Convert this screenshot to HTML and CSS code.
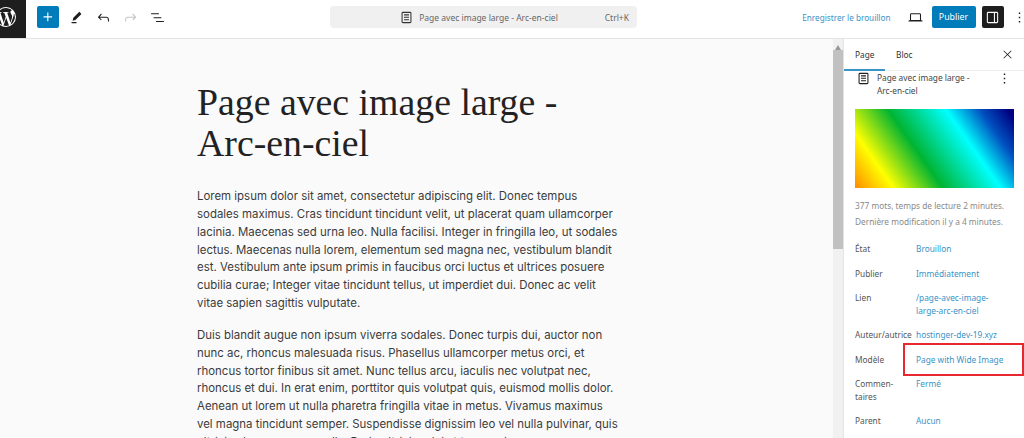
FILE: index.html
```html
<!DOCTYPE html>
<html lang="fr">
<head>
    <meta charset="UTF-8">
    <title>Page avec image large - Arc-en-ciel</title>
    <link rel="stylesheet" href="styles.css">
</head>
<body>
    <header class="topbar">
        <div class="tools">
            <a class="wp-logo">
                <svg width="20" height="20" viewBox="0 0 20 20"><path fill="#fff" fill-rule="evenodd" d="M10 0a10 10 0 1 0 0 20 10 10 0 0 0 0-20zM1.1 10c0-1.3.3-2.5.8-3.6l4.200 11.700A8.900 8.900 0 0 1 1.100 10zm8.900 8.900c-.9 0-1.700-.1-2.500-.4l2.700-7.700 2.700 7.500.1.100c-.9.300-1.900.5-3 .5zm1.200-13.100c.5 0 1-.1 1-.1.500-.1.400-.8 0-.8 0 0-1.500.1-2.400.1-.9 0-2.400-.1-2.400-.1-.5 0-.5.800-.1.800 0 0 .5.100 1 .1l1.400 3.900-2 6-3.300-9.900c.6 0 1-.1 1-.1.500-.1.400-.8 0-.8 0 0-1.500.1-2.400.1h-.6A8.900 8.900 0 0 1 10 1.100c2.300 0 4.400.9 6 2.300h-.1c-.9 0-1.500.8-1.500 1.600 0 .8.400 1.400.9 2.200.4.600.8 1.400.8 2.500 0 .8-.3 1.700-.7 3l-.9 3.100-3.300-10zm3.300 12l2.700-7.800c.5-1.300.7-2.300.7-3.200 0-.3 0-.6-.1-.9a8.900 8.900 0 0 1-3.300 11.900z"/></svg>
            </a>
            <button class="btn-primary btn-plus">
                <svg width="18" height="18" viewBox="0 0 24 24"><path fill="#fff" d="M11 12.500V17.500H12.500V12.500H17.500V11H12.500V6H11V11H6V12.500H11Z"/></svg>
            </button>
            <svg class="icon icon-first" viewBox="0 0 24 24"><path d="m19 7-3-3-8.500 8.500-1 4 4-1L19 7Zm-7 11.500H5V20h7v-1.500Z"/></svg>
            <svg class="icon" viewBox="0 0 24 24"><path d="M18.300 11.700c-.6-.6-1.400-.9-2.300-.9H6.700l2.900-3.300-1.100-1-4.500 5L8.500 16l1-1-2.700-2.700H16c.5 0 .9.200 1.300.5 1 1 1 3.400 1 4.500v.3h1.500v-.2c0-1.500 0-4.300-1.500-5.700z"/></svg>
            <svg class="icon icon-off" viewBox="0 0 24 24"><path d="M15.600 6.500l-1.100 1 2.900 3.300H8c-.9 0-1.700.3-2.300.9-1.400 1.500-1.400 4.200-1.400 5.600v.2h1.500v-.3c0-1.100 0-3.500 1-4.500.3-.3.700-.5 1.300-.5h9.200L14.500 15l1.100 1.100 4.600-4.600-4.600-5z"/></svg>
            <svg class="icon" viewBox="0 0 24 24"><path d="M3 6h11v1.500H3V6Zm3.500 5.500h11V13h-11v-1.500ZM21 17H10v1.500h11V17Z"/></svg>
        </div>
        <div class="command-bar">
            <span></span>
            <span class="command-title">
                <svg class="icon" viewBox="0 0 24 24"><path fill-rule="evenodd" d="M15.500 7.500h-7V9h7V7.500Zm-7 3.500h7v1.500h-7V11Zm7 3.500h-7V16h7v-1.500ZM17 4H7a2 2 0 0 0-2 2v12a2 2 0 0 0 2 2h10a2 2 0 0 0 2-2V6a2 2 0 0 0-2-2Zm.5 14a.5.5 0 0 1-.5.5H7a.5.5 0 0 1-.5-.5V6a.5.5 0 0 1 .5-.5h10a.5.5 0 0 1 .5.500v12Z"/></svg>
                Page avec image large - Arc-en-ciel
            </span>
            <span class="shortcut">Ctrl+K</span>
        </div>
        <div class="actions">
            <a class="save-draft">Enregistrer le brouillon</a>
            <svg class="icon icon-view" viewBox="0 0 24 24"><path fill-rule="evenodd" d="M20.500 16h-.7V8c0-1.100-.9-2-2-2H6.200c-1.100 0-2 .9-2 2v8h-.7c-.8 0-1.500.7-1.500 1.500h20c0-.8-.7-1.500-1.500-1.500zM5.700 8c0-.3.2-.5.5-.5h11.600c.3 0 .5.200.5.500v7.600H5.700V8z"/></svg>
            <button class="btn-primary btn-publish">Publier</button>
            <button class="btn-drawer">
                <svg width="17" height="17" viewBox="0 0 24 24"><path fill="#fff" fill-rule="evenodd" d="M18 4H6c-1.100 0-2 .9-2 2v12c0 1.100.9 2 2 2h12c1.100 0 2-.9 2-2V6c0-1.100-.9-2-2-2zm-4 14.500H6c-.3 0-.5-.2-.5-.5V6c0-.3.2-.5.5-.5h8v13zm4.500-.5c0 .3-.2.500-.5.500h-2.500v-13H18c.3 0 .5.200.5.500v12z"/></svg>
            </button>
            <svg class="icon icon-more" viewBox="0 0 24 24"><path d="M13 19h-2v-2h2v2zm0-6h-2v-2h2v2zm0-6h-2V5h2v2z"/></svg>
        </div>
    </header>

    <div class="workspace">
        <main class="editor">
            <h1 class="post-title">Page avec image large - Arc-en-ciel</h1>
            <p>Lorem ipsum dolor sit amet, consectetur adipiscing elit. Donec tempus sodales maximus. Cras tincidunt tincidunt velit, ut placerat quam ullamcorper lacinia. Maecenas sed urna leo. Nulla facilisi. Integer in fringilla leo, ut sodales lectus. Maecenas nulla lorem, elementum sed magna nec, vestibulum blandit est. Vestibulum ante ipsum primis in faucibus orci luctus et ultrices posuere cubilia curae; Integer vitae tincidunt tellus, ut imperdiet dui. Donec ac velit vitae sapien sagittis vulputate.</p>
            <p>Duis blandit augue non ipsum viverra sodales. Donec turpis dui, auctor non nunc ac, rhoncus malesuada risus. Phasellus ullamcorper metus orci, et rhoncus tortor finibus sit amet. Nunc tellus arcu, iaculis nec volutpat nec, rhoncus et dui. In erat enim, porttitor quis volutpat quis, euismod mollis dolor. Aenean ut lorem ut nulla pharetra fringilla vitae in metus. Vivamus maximus vel magna tincidunt semper. Suspendisse dignissim leo vel nulla pulvinar, quis ultricies lacus congue nulla. Proin ultricies dui at tempus ipsum congue aliquet.</p>
        </main>

        <div class="scrollbar">
            <div class="scroll-arrow"></div>
            <div class="scroll-thumb"></div>
        </div>

        <aside class="sidebar">
            <div class="tabs">
                <span class="tab tab-active">Page</span>
                <span class="tab">Bloc</span>
                <svg class="icon icon-close" viewBox="0 0 24 24"><path d="m13.060 12 6.470-6.470-1.060-1.060L12 10.940 5.530 4.470 4.470 5.530 10.940 12l-6.470 6.470 1.060 1.060L12 13.060l6.470 6.470 1.060-1.060L13.060 12Z"/></svg>
            </div>
            <div class="panel">
                <div class="page-head">
                    <svg class="icon" viewBox="0 0 24 24"><path fill-rule="evenodd" d="M15.500 7.500h-7V9h7V7.500Zm-7 3.500h7v1.500h-7V11Zm7 3.500h-7V16h7v-1.500ZM17 4H7a2 2 0 0 0-2 2v12a2 2 0 0 0 2 2h10a2 2 0 0 0 2-2V6a2 2 0 0 0-2-2Zm.5 14a.5.5 0 0 1-.5.5H7a.5.5 0 0 1-.5-.5V6a.5.5 0 0 1 .5-.5h10a.5.5 0 0 1 .5.500v12Z"/></svg>
                    <span class="page-name">Page avec image large - Arc-en-ciel</span>
                    <svg class="icon" viewBox="0 0 24 24"><path d="M13 19h-2v-2h2v2zm0-6h-2v-2h2v2zm0-6h-2V5h2v2z"/></svg>
                </div>
                <div class="featured"></div>
                <p class="meta">377 mots, temps de lecture 2 minutes.<br>Dernière modification il y a 4 minutes.</p>
                <dl class="props">
                    <div class="prop"><dt>État</dt><dd>Brouillon</dd></div>
                    <div class="prop"><dt>Publier</dt><dd>Immédiatement</dd></div>
                    <div class="prop"><dt>Lien</dt><dd>/page-avec-image-<br>large-arc-en-ciel</dd></div>
                    <div class="prop"><dt>Auteur/autrice</dt><dd>hostinger-dev-19.xyz</dd></div>
                    <div class="prop"><dt>Modèle</dt><dd class="marked">Page with Wide Image</dd></div>
                    <div class="prop"><dt>Commen-<br>taires</dt><dd>Fermé</dd></div>
                    <div class="prop"><dt>Parent</dt><dd>Aucun</dd></div>
                </dl>
            </div>
        </aside>
    </div>
</body>
</html>
```

FILE: styles.css
```css
* {
    box-sizing: border-box;
}
html, body {
    height: 100%;
}
body {
    margin: 0;
    overflow: hidden;
    background: #fff;
    font-family: "Noto Sans", sans-serif;
    font-size: 8.3px;
    color: #333;
}
button {
    border: none;
    padding: 0;
    font-family: inherit;
}
.icon {
    width: 17px;
    height: 17px;
    flex: none;
    fill: #1e1e1e;
}
.icon-off {
    fill: #c4c4c4;
}

/* top bar */
.topbar {
    display: grid;
    grid-template-columns: 330px 307px 1fr;
    align-items: center;
    height: 39px;
    border-bottom: 1px solid #e4e4e4;
}
.tools {
    display: flex;
    align-items: center;
    gap: 10px;
    height: 38px;
}
.tools > .icon,
.btn-plus {
    margin-bottom: 4px;
}
.wp-logo {
    display: flex;
    align-items: center;
    justify-content: flex-end;
    flex: none;
    width: 26px;
    height: 38px;
    padding: 0 10px 4px 0;
    background: #1e1e1e;
    overflow: hidden;
}
.wp-logo svg {
    flex: none;
}
.btn-primary {
    background: #007cba;
    color: #fff;
    border-radius: 2px;
}
.btn-plus {
    display: flex;
    align-items: center;
    justify-content: center;
    width: 22px;
    height: 22px;
    margin-left: 1px;
}
.tools > .icon-first {
    margin-left: -1.5px;
}
.command-bar {
    display: grid;
    grid-template-columns: 1fr auto 1fr;
    align-items: center;
    height: 22px;
    margin-bottom: 4px;
    padding: 0 8px;
    background: #f0f0f0;
    border-radius: 4px;
    font-size: 8.5px;
    color: #666;
}
.command-title {
    display: flex;
    align-items: center;
    gap: 4px;
    padding-right: 11px;
}
.command-title .icon {
    fill: #333;
}
.shortcut {
    justify-self: end;
}
.actions {
    display: flex;
    align-items: center;
    justify-content: flex-end;
    height: 38px;
    padding-bottom: 4px;
}
.save-draft {
    color: #3a93c6;
    font-size: 8.2px;
}
.icon-view {
    margin-left: 16.5px;
    margin-right: 7.5px;
}
.btn-publish {
    width: 44px;
    height: 22px;
    font-size: 8.8px;
}
.btn-drawer {
    display: flex;
    align-items: center;
    justify-content: center;
    width: 22px;
    height: 22px;
    margin-left: 6px;
    background: #1e1e1e;
    border-radius: 2px;
}
.icon-more {
    margin-left: 7px;
    margin-right: -3.5px;
}

/* main area */
.workspace {
    display: flex;
    height: 399px;
}
.editor {
    flex: 1;
    min-width: 0;
    padding: 43px 0 0 197px;
    background: #fafafa;
    overflow: hidden;
    font-family: Inter, sans-serif;
    font-size: 11.45px;
    line-height: 17.85px;
    color: #3a3a3a;
}
.post-title {
    width: 400px;
    margin: 0 0 24px;
    font-family: "Liberation Serif", serif;
    font-size: 37.8px;
    font-weight: 400;
    line-height: 41px;
    color: #222;
}
.editor p {
    width: 424px;
    margin: 0 0 14px;
}
.scrollbar {
    flex: none;
    width: 10px;
    background: #f1f1f1;
}
.scroll-arrow {
    width: 0;
    height: 11px;
    margin: 0 auto;
    border: solid transparent;
    border-width: 3px 3px 5px;
    border-top-width: 3px;
    border-bottom-color: #999;
}
.scroll-thumb {
    height: 199px;
    background: #c1c1c1;
}
.sidebar {
    flex: none;
    width: 181px;
    border-left: 1px solid #e4e4e4;
    overflow: hidden;
}
.tabs {
    display: flex;
    align-items: center;
    height: 32px;
    border-bottom: 1px solid #eee;
}
.tab {
    display: flex;
    align-items: center;
    height: 32px;
    padding: 0 11px;
    color: #333;
}
.tab-active {
    width: 41px;
    box-shadow: inset 0 -2px 0 #3a94c8;
}
.icon-close {
    width: 13px;
    height: 13px;
    margin-left: auto;
    margin-right: 10.5px;
}
.panel {
    padding: 0 10px 0 11px;
}
.page-head {
    display: flex;
    align-items: flex-start;
    gap: 5px;
    height: 38px;
    line-height: 13px;
}
.page-name {
    width: 104px;
    color: #444;
}
.page-head .icon:last-child {
    margin-left: auto;
    margin-right: 1.5px;
}
.page-head .icon {
    margin-top: -1px;
}
.featured {
    height: 79px;
    background: linear-gradient(55deg, #ff8c00 0%, #ffff00 18%, #00b432 41%, #00ffff 68%, #0050c0 84%, #000080 97%);
}
.meta {
    margin: 10px 0 0;
    line-height: 16px;
    white-space: nowrap;
    color: #8a8a8a;
}
.props {
    display: flex;
    flex-direction: column;
    gap: 12px;
    margin: 13px 0 0;
}
.prop {
    display: grid;
    grid-template-columns: 61px 1fr;
    line-height: 12.5px;
}
.prop dt {
    color: #555;
}
.prop dd {
    margin: 0;
    color: #3a93c6;
    white-space: nowrap;
}
.marked {
    position: relative;
}
.marked::after {
    content: "";
    position: absolute;
    top: -11px;
    left: -13px;
    width: 117px;
    height: 29px;
    border: 2px solid #e8282f;
}
```
